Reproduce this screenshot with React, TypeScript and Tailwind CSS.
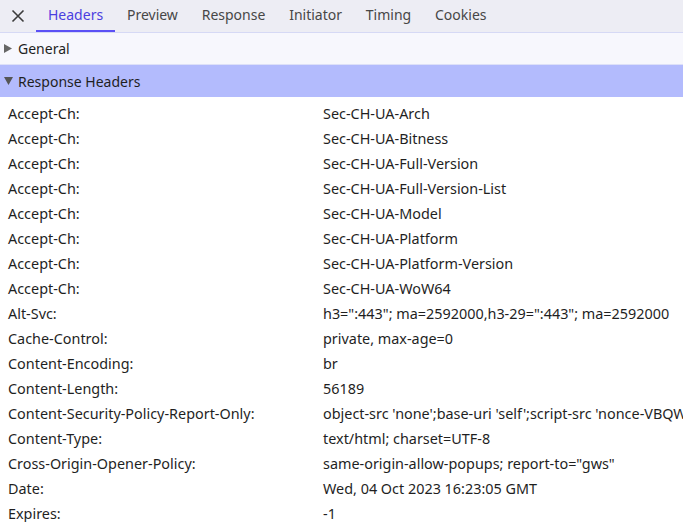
import React from "react";

const rows: [string, string][] = [
  ["Accept-Ch:", "Sec-CH-UA-Arch"],
  ["Accept-Ch:", "Sec-CH-UA-Bitness"],
  ["Accept-Ch:", "Sec-CH-UA-Full-Version"],
  ["Accept-Ch:", "Sec-CH-UA-Full-Version-List"],
  ["Accept-Ch:", "Sec-CH-UA-Model"],
  ["Accept-Ch:", "Sec-CH-UA-Platform"],
  ["Accept-Ch:", "Sec-CH-UA-Platform-Version"],
  ["Accept-Ch:", "Sec-CH-UA-WoW64"],
  ["Alt-Svc:", 'h3=":443"; ma=2592000,h3-29=":443"; ma=2592000'],
  ["Cache-Control:", "private, max-age=0"],
  ["Content-Encoding:", "br"],
  ["Content-Length:", "56189"],
  ["Content-Security-Policy-Report-Only:", "object-src 'none';base-uri 'self';script-src 'nonce-VBQW"],
  ["Content-Type:", "text/html; charset=UTF-8"],
  ["Cross-Origin-Opener-Policy:", 'same-origin-allow-popups; report-to="gws"'],
  ["Date:", "Wed, 04 Oct 2023 16:23:05 GMT"],
  ["Expires:", "-1"],
];

const tabs = ["Headers", "Preview", "Response", "Initiator", "Timing", "Cookies"];

export default function App() {
  return (
    <div
      className="w-[683px] h-[522px] overflow-hidden bg-white text-[14px] text-[#1f1f1f]"
      style={{ fontFamily: '"Noto Sans", "Open Sans", sans-serif' }}
    >
      <div className="h-[33px] flex items-stretch bg-[#ededf4] border-b border-[#d6d9f5]">
        <div className="w-[36px] flex items-center justify-center pb-[1px]">
          <svg width="14" height="14" viewBox="0 0 14 14">
            <path d="M1.5 1.5 L12.5 12.5 M12.5 1.5 L1.5 12.5" stroke="#3c3c3c" strokeWidth="1.6" />
          </svg>
        </div>
        {tabs.map((t, i) => (
          <div
            key={t}
            className={
              "px-[12px] first:pl-[12px] flex items-center border-b-2 pb-[1px] " +
              (i === 0 ? "text-[#4b3fe0] border-[#5b50f5]" : "text-[#474747] border-transparent -ml-[0.2px]")
            }
          >
            {t}
          </div>
        ))}
      </div>
      <div className="h-[32px] flex items-center bg-[#f7f7fd] border-b border-[#dde0f8]">
        <svg width="8" height="9" viewBox="0 0 8 9" className="ml-[4px] mr-[6px]">
          <path d="M0 0 L8 4.5 L0 9 Z" fill="#666" />
        </svg>
        <span>General</span>
      </div>
      <div className="h-[32px] flex items-center bg-[#b3bbfd]">
        <svg width="9" height="8" viewBox="0 0 9 8" className="ml-[4px] mr-[5px]">
          <path d="M0 0 L9 0 L4.5 8 Z" fill="#555" />
        </svg>
        <span>Response Headers</span>
      </div>
      <div className="pt-[4px] text-[14.4px]">
        {rows.map(([k, v], i) => (
          <div key={i} className="h-[25px] flex items-center whitespace-nowrap">
            <div className="w-[323px] pl-[8px] shrink-0">{k}</div>
            <div>{v}</div>
          </div>
        ))}
      </div>
    </div>
  );
}
